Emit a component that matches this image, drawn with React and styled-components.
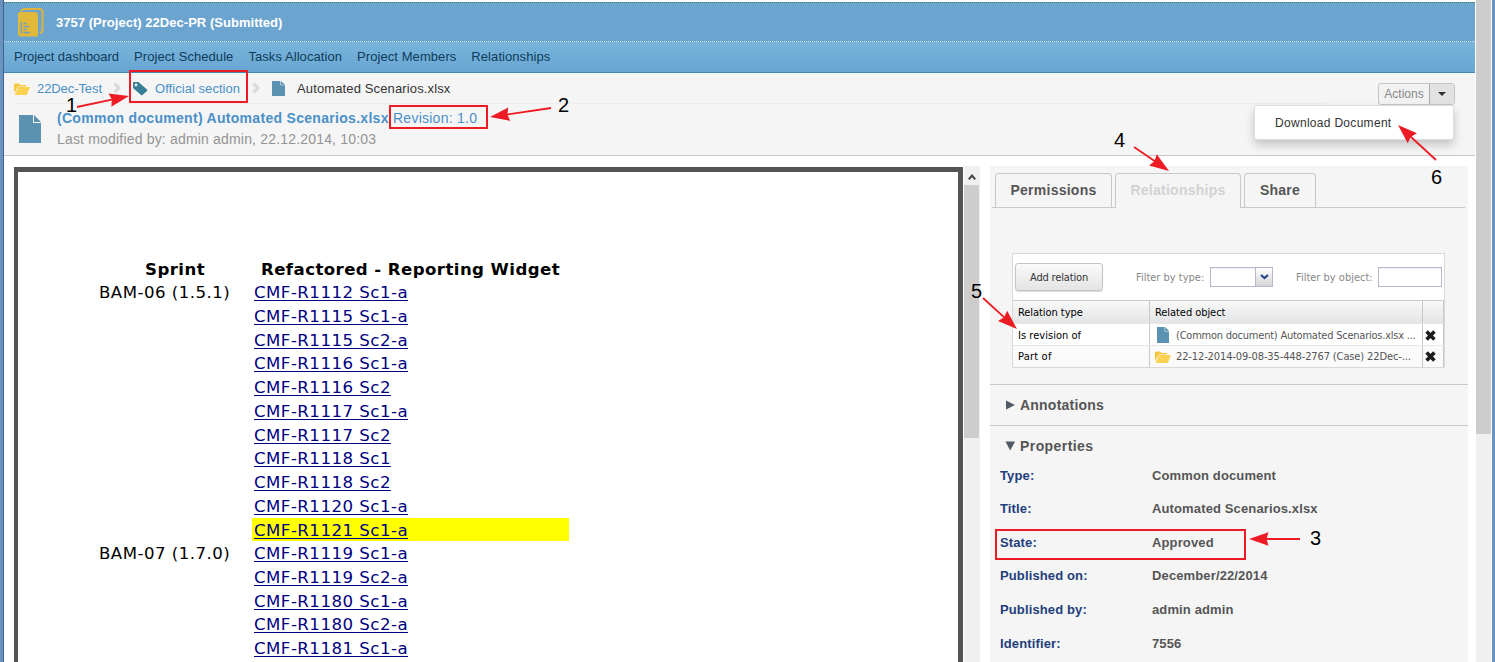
import React from 'react';
import styled, { createGlobalStyle } from 'styled-components';

const Global = createGlobalStyle`
  * { box-sizing: border-box; }
  body { margin: 0; background: #fff; overflow: hidden; font-family: "Liberation Sans", Arial, sans-serif; }
`;
const Window = styled.div`
  position: relative; display: flex; width: 1495px; height: 662px; overflow: hidden;
  background: #fff; border-left: 3px solid #6b93c1; border-right: 3px solid #6b93c1;
`;
const Page = styled.div`
  width: 1472px; height: 662px; flex: none; display: flex; flex-direction: column;
  border-left: 1px solid #41638c; padding-top: 2px;
`;
const Title = styled.header`
  height: 40px; flex: none; display: flex; align-items: center; gap: 12px; padding: 0 0 0 14px;
  background: #6ca4d0; border-top: 1px dotted #3d7d52; border-bottom: 1px dotted #d4e8f5;
  color: #fff; font-size: 13px; font-weight: bold; letter-spacing: 0.03px;
`;
const Nav = styled.nav`
  height: 31px; flex: none; display: flex; align-items: center; gap: 15px; padding: 0 0 1px 10px;
  background: linear-gradient(#77b5dc, #69a5d1); border-bottom: 1px solid #4188b7;
  color: #0e3c5a; font-size: 13px; white-space: nowrap;
`;
const NavItem = styled.span`letter-spacing: 0.07px; &:first-child { letter-spacing: -0.03px; }`;
const Heading = styled.section`
  height: 83px; flex: none; background: #f5f5f5; border-bottom: 1px solid #c8c8c8;
  display: flex; justify-content: space-between; padding-right: 20px;
`;
const HeadMain = styled.div`flex: 1; padding-left: 10px;`;
const Crumbs = styled.div`
  height: 31px; display: flex; align-items: center; border-bottom: 1px solid #ededed; width: 1312px;
  font-size: 13px; color: #4a90c8; white-space: nowrap;
`;
const Crumb = styled.span`
  margin-left: ${p => p.$left}px; width: ${p => p.$w}px; color: ${p => p.$dark ? '#333' : '#4a90c8'};
  letter-spacing: ${p => p.$ls || 0}px;
`;
const IconBox = styled.span`display: flex; flex: none; margin-left: ${p => p.$left || 0}px; padding-top: ${p => p.$top || 0}px;`;
const DocHead = styled.div`display: flex; padding: 4px 0 0 5px; gap: 16px;`;
const DocIcon = styled.div`padding-top: 7px; display: flex;`;
const DocTitle = styled.div`
  display: flex; gap: 4px; height: 20px; align-items: center; color: #4a90c8; font-size: 14px; white-space: nowrap;
`;
const TitleName = styled.b`width: 332px; letter-spacing: 0.3px;`;
const Revision = styled.span`letter-spacing: 0.25px;`;
const Modified = styled.div`height: 22px; line-height: 23px; color: #949494; font-size: 14px; letter-spacing: 0.18px;`;
const Actions = styled.div`
  display: flex; width: 77px; height: 22px; margin-top: 10px; border: 1px solid #c4c4c4; border-radius: 3px;
  background: #f2f2f2; overflow: hidden; color: #888; font-size: 12px;
`;
const ActionLabel = styled.span`width: 50px; line-height: 21px; text-align: center; letter-spacing: 0.05px;`;
const ActionCaret = styled.span`
  flex: 1; display: flex; align-items: center; justify-content: center; background: #e2e2e2; border-left: 1px solid #aaa;
`;
const Menu = styled.div`
  position: absolute; left: 1251px; top: 105px; width: 200px; height: 35px; padding-left: 20px; line-height: 34px;
  background: #fff; border: 1px solid #dedede; border-radius: 3px; box-shadow: 0 5px 10px rgba(0,0,0,.2);
  color: #333; font-size: 12px; letter-spacing: 0.3px;
`;
const Body = styled.main`flex: 1; display: flex; padding: 10px 0 0 10px; min-height: 0;`;
const Viewer = styled.div`
  width: 949px; margin-top: 1px; border: solid #545454; border-width: 5px 5px 0 4px; padding: 84.6px 0 0 77px; overflow: hidden;
  font-family: "DejaVu Sans", Verdana, sans-serif; font-size: 16.6px; color: #000;
`;
const SheetRow = styled.div`
  display: flex; height: 23.73px; line-height: ${p => p.$head ? 25 : 26.6}px; white-space: nowrap; letter-spacing: ${p => p.$head ? 0.42 : 0.48}px;
  font-weight: ${p => p.$head ? 'bold' : 'normal'};
`;
const Sprint = styled.div`
  width: 157px; padding-left: ${p => p.$head ? 3 : 4}px; text-align: ${p => p.$head ? 'center' : 'left'};
`;
const Scenario = styled.div`
  width: 317px; padding-left: ${p => p.$head ? 9 : 2}px; background: ${p => p.$mark ? '#ff0' : 'transparent'};
`;
const Link = styled.a`color: #000080; text-decoration: underline; text-underline-offset: 2px; text-decoration-thickness: 1px;`;
const Track = styled.div`
  width: ${p => p.$w}px; flex: none; background: #f0f0f0; margin-left: 1px; display: flex; flex-direction: column; align-items: flex-start;
`;
const ArrowUp = styled.div`width: 15px; height: 19px; display: flex; align-items: center; justify-content: center; padding-top: 3px;`;
const Thumb = styled.div`width: ${p => p.$w}px; height: ${p => p.$h}px; background: #cdcdcd;`;
const WindowTrack = styled(Track)`width: 16px; border-right: 1px solid #fff;`;
const Side = styled.aside`
  width: 478px; flex: none; margin-left: 10px; background: #f5f5f5; display: flex; flex-direction: column;
`;
const Tabs = styled.div`
  display: flex; flex: none; height: 42px; margin: 0 3px 0 2px; padding: 7px 0 0 3px; gap: 3px; border-bottom: 1px solid #c8c8c8;
`;
const Tab = styled.div`
  width: ${p => p.$w}px; height: ${p => p.$active ? 35 : 34}px; border: 1px solid #c8c8c8; border-bottom: 0;
  border-radius: 4px 4px 0 0; background: #f5f5f5; text-align: center; line-height: 32px;
  font-size: 14px; font-weight: bold; color: ${p => p.$active ? '#d2d2d2' : '#555'}; letter-spacing: 0.25px;
`;
const Grid = styled.div`
  flex: none; width: 433px; height: 115px; margin: 45px 0 0 22px; background: #fff; border: 1px solid #d9d9d9;
  font-family: "DejaVu Sans Condensed", "DejaVu Sans", sans-serif; font-stretch: condensed; font-size: 11px;
  white-space: nowrap;
`;
const Tools = styled.div`height: 46px; display: flex; align-items: center; padding: 0 2px; color: #888;`;
const AddButton = styled.div`
  width: 88px; height: 28px; border: 1px solid #c4c4c4; border-radius: 3px; background: linear-gradient(#fafafa, #e4e4e4);
  box-shadow: 0 1px 1px rgba(0,0,0,.15); color: #333; line-height: 27px; text-align: center; letter-spacing: -0.16px;
`;
const FilterLabel = styled.span`margin-left: ${p => p.$left}px; width: ${p => p.$w}px; letter-spacing: 0;`;
const Field = styled.div`
  width: ${p => p.$w}px; height: 20px; border: 1px solid #b5b8c8; background: linear-gradient(#f3f3f3, #fff 3px);
  display: flex; justify-content: flex-end;
`;
const Trigger = styled.div`
  width: 17px; border-left: 1px solid #b5b8c8; background: linear-gradient(#fff, #d5d5d5); display: flex; align-items: center; justify-content: center;
`;
const GridRow = styled.div`
  display: flex; height: ${p => p.$h}px; align-items: stretch; border-top: 1px solid ${p => p.$head ? '#ccc' : '#e6e6e6'};
  background: ${p => p.$head ? 'linear-gradient(#f9f9f9, #e3e4e6)' : p.$alt ? '#fafafa' : '#fff'};
`;
const Cell = styled.div`
  width: ${p => p.$w}px; display: flex; align-items: center; padding: ${p => p.$top || 0}px 0 0 5px; gap: ${p => p.$gap || 6}px; color: ${p => p.$muted ? '#555' : '#000'};
  border-right: 1px solid #c8c8c8; letter-spacing: ${p => p.$ls ?? -0.06}px;
`;
const Section = styled.div`
  flex: none; height: ${p => p.$h}px; border-top: 1px solid #c8c8c8; display: flex; align-items: center; gap: 5px;
  padding: ${p => p.$pad || 0}px 0 0 15px;
  font-size: 14px; font-weight: bold; color: #555; letter-spacing: ${p => p.$ls}px;
  margin-top: ${p => p.$gap || 0}px;
`;
const Properties = styled.dl`margin: 0; padding: 0 0 0 10px;`;
const Property = styled.div`
  height: 33.55px; display: flex; align-items: center; font-size: 13px; font-weight: bold; letter-spacing: 0.13px;
`;
const Name = styled.dt`width: 152px; color: #233e7c;`;
const Value = styled.dd`margin: 0; color: #555;`;
const Highlight = styled.div`
  position: absolute; border: 2px solid #ed1c24; left: ${p => p.$x - 3}px; top: ${p => p.$y}px; width: ${p => p.$w}px; height: ${p => p.$h}px;
`;
const Callout = styled.span`
  position: absolute; left: ${p => p.$x - 3}px; top: ${p => p.$y}px; font-size: 20px; line-height: 20px; color: #000;
`;
const Arrows = styled.svg`position: absolute; left: -3px; top: 0; pointer-events: none;`;

const FileIcon = ({ w = 13, h = 15 }) => (
  <svg width={w} height={h} viewBox="0 0 22 28" preserveAspectRatio="none"><path d="M0 0H14V8H22V28H0Z" fill="#5b92b1" /><path d="M15 0L22 7H15Z" fill="#5b92b1" /></svg>
);
const FolderIcon = () => (
  <svg width="16" height="12" viewBox="0 0 16 12"><path d="M0 10V1.500Q0 .5 1 .5H5L6.500 2H12V3.500H4L1 8.500Z" fill="#f6c73f" /><path d="M.6 12L4.300 4H16L12.800 12Z" fill="#fbd250" /></svg>
);
const Chevron = () => (
  <svg width="9" height="12" viewBox="0 0 9 12"><path d="M1.500 1.500L6 6L1.500 10.500" fill="none" stroke="#d8d8d8" strokeWidth="3" /></svg>
);
const TagIcon = () => (
  <svg width="15" height="14" viewBox="0 0 15 14"><path d="M0 1Q0 0 1 0H5.500L14 7.500Q14.800 8.300 14 9L9.500 13Q8.800 13.600 8 13L0 6Z" fill="#3a7f98" /><circle cx="3" cy="3" r="1.400" fill="#f5f5f5" /></svg>
);
const ProjectIcon = () => (
  <svg width="26" height="29" viewBox="0 0 26 29">
    <path d="M2.500 3L6 1H21Q24.500 1 24.500 4V23L22 25.500" fill="none" stroke="#dcb43c" strokeWidth="2" />
    <path d="M0 5.500Q0 4 2 4H17Q20 4 20 7V28.500H3Q0 28.500 0 25Z" fill="#e0b93a" />
    <path d="M3.200 14V25.500M5.500 15.500H8.500M5.500 18.500H11M5.500 21.500H8.500M5.500 24.500H12" stroke="#6d9fc0" strokeWidth="1.300" fill="none" />
  </svg>
);
const Cross = () => (
  <svg width="11" height="11" viewBox="0 0 11 11"><path d="M1.600 1.600L9.400 9.400M9.400 1.600L1.600 9.400" stroke="#1c1c1c" strokeWidth="3.600" /></svg>
);
const Triangle = ({ open }) => (
  <svg width="10" height="10" viewBox="0 0 10 10"><path d={open ? 'M.5 .5H10L5.200 9.500Z' : 'M1 .5L10 5L1 9.500Z'} fill="#505a64" /></svg>
);

const rows = [
  ['BAM-06 (1.5.1)', 'CMF-R1112 Sc1-a'], ['', 'CMF-R1115 Sc1-a'], ['', 'CMF-R1115 Sc2-a'], ['', 'CMF-R1116 Sc1-a'],
  ['', 'CMF-R1116 Sc2'], ['', 'CMF-R1117 Sc1-a'], ['', 'CMF-R1117 Sc2'], ['', 'CMF-R1118 Sc1'], ['', 'CMF-R1118 Sc2'],
  ['', 'CMF-R1120 Sc1-a'], ['', 'CMF-R1121 Sc1-a', true], ['BAM-07 (1.7.0)', 'CMF-R1119 Sc1-a'], ['', 'CMF-R1119 Sc2-a'],
  ['', 'CMF-R1180 Sc1-a'], ['', 'CMF-R1180 Sc2-a'], ['', 'CMF-R1181 Sc1-a'],
];
const properties = [
  ['Type:', 'Common document'], ['Title:', 'Automated Scenarios.xlsx'], ['State:', 'Approved'],
  ['Published on:', 'December/22/2014'], ['Published by:', 'admin admin'], ['Identifier:', '7556'],
];
const menu = ['Project dashboard', 'Project Schedule', 'Tasks Allocation', 'Project Members', 'Relationships'];
const highlights = [[129, 70, 119, 33], [389, 105, 99, 24], [995, 529, 251, 31]];
const callouts = [['1', 66, 95], ['2', 558, 95], ['3', 1310, 528], ['4', 1114, 130], ['5', 971, 281], ['6', 1431, 167]];
const arrows = [[77, 107, 129, 96], [551, 108, 490, 117], [1300, 539, 1249, 539], [1134, 147, 1169, 171], [983, 298, 1017, 329], [1436, 160, 1398, 125]];

const Arrow = ({ from: [x1, y1, x2, y2] }) => {
  const len = Math.hypot(x2 - x1, y2 - y1);
  const angle = Math.atan2(y2 - y1, x2 - x1) * 180 / Math.PI;
  return (
    <g transform={`translate(${x2} ${y2}) rotate(${angle})`} fill="#ed1c24">
      <path d={`M${-len} 0H-14`} stroke="#ed1c24" strokeWidth="1.8" />
      <path d="M0 0L-19.500 -6.800L-17.500 0L-19.500 6.800Z" />
    </g>
  );
};

export default function App() {
  return (
    <>
      <Global />
      <Window>
        <Page>
          <Title><ProjectIcon /><span>3757 (Project) 22Dec-PR (Submitted)</span></Title>
          <Nav>{menu.map(m => <NavItem key={m}>{m}</NavItem>)}</Nav>
          <Heading>
            <HeadMain>
              <Crumbs>
                <IconBox $top={1}><FolderIcon /></IconBox><Crumb $left={7} $w={76} $ls={-0.08}>22Dec-Test</Crumb>
                <Chevron /><IconBox $left={11} $top={2}><TagIcon /></IconBox>
                <Crumb $left={7} $w={97} $ls={0.05}>Official section</Crumb>
                <Chevron /><IconBox $left={11} $top={1}><FileIcon /></IconBox>
                <Crumb $left={12} $w={160} $ls={0.13} $dark>Automated Scenarios.xlsx</Crumb>
              </Crumbs>
              <DocHead>
                <DocIcon><FileIcon w={22} h={28} /></DocIcon>
                <div>
                  <DocTitle><TitleName>(Common document) Automated Scenarios.xlsx</TitleName><Revision>Revision: 1.0</Revision></DocTitle>
                  <Modified>Last modified by: admin admin, 22.12.2014, 10:03</Modified>
                </div>
              </DocHead>
            </HeadMain>
            <Actions>
              <ActionLabel>Actions</ActionLabel>
              <ActionCaret><svg width="8" height="4" viewBox="0 0 8 4"><path d="M0 0H8L4 4Z" fill="#333" /></svg></ActionCaret>
            </Actions>
          </Heading>
          <Body>
            <Viewer>
              <SheetRow $head><Sprint $head>Sprint</Sprint><Scenario $head>Refactored - Reporting Widget</Scenario></SheetRow>
              {rows.map(([s, l, mark]) => (
                <SheetRow key={l}><Sprint>{s}</Sprint><Scenario $mark={mark}><Link>{l}</Link></Scenario></SheetRow>
              ))}
            </Viewer>
            <Track $w={16}>
              <ArrowUp><svg width="8" height="6" viewBox="0 0 8 6"><path d="M.8 5.300L4 1.500L7.200 5.300" fill="none" stroke="#444" strokeWidth="2" /></svg></ArrowUp>
              <Thumb $w={15} $h={253} />
            </Track>
            <Side>
              <Tabs>
                <Tab $w={117}>Permissions</Tab><Tab $w={126} $active>Relationships</Tab><Tab $w={72}>Share</Tab>
              </Tabs>
              <Grid>
                <Tools>
                  <AddButton>Add relation</AddButton>
                  <FilterLabel $left={33} $w={74}>Filter by type:</FilterLabel>
                  <Field $w={63}><Trigger><svg width="9" height="6" viewBox="0 0 9 6"><path d="M1 1L4.500 4L8 1" fill="none" stroke="#26478d" strokeWidth="2.200" /></svg></Trigger></Field>
                  <FilterLabel $left={23} $w={82}>Filter by object:</FilterLabel>
                  <Field $w={64} />
                </Tools>
                <GridRow $head $h={23}><Cell $w={137}>Relation type</Cell><Cell $w={273}>Related object</Cell><Cell $w={21} /></GridRow>
                <GridRow $h={22}>
                  <Cell $w={137} $top={1} $ls={0.03}>Is revision of</Cell>
                  <Cell $w={273} $top={1} $gap={7} $muted $ls={-0.23}><IconBox $left={2}><FileIcon w={12} h={16} /></IconBox><span>(Common document) Automated Scenarios.xlsx ...</span></Cell>
                  <Cell $w={21} $top={1}><IconBox $left={-3}><Cross /></IconBox></Cell>
                </GridRow>
                <GridRow $h={22} $alt>
                  <Cell $w={137} $ls={0.2}>Part of</Cell>
                  <Cell $w={273} $gap={5} $muted $ls={-0.12}><FolderIcon /><span>22-12-2014-09-08-35-448-2767 (Case) 22Dec-...</span></Cell>
                  <Cell $w={21}><IconBox $left={-3}><Cross /></IconBox></Cell>
                </GridRow>
              </Grid>
              <Section $gap={16} $h={41} $ls={0.22}><Triangle />Annotations</Section>
              <Section $h={33.5} $pad={7} $ls={0.42}><Triangle open />Properties</Section>
              <Properties>
                {properties.map(([n, v]) => <Property key={n}><Name>{n}</Name><Value>{v}</Value></Property>)}
              </Properties>
            </Side>
          </Body>
        </Page>
        <WindowTrack $w={16}><Thumb $w={15} $h={434} /></WindowTrack>
        <Menu>Download Document</Menu>
        {highlights.map(([x, y, w, h]) => <Highlight key={x} $x={x} $y={y} $w={w} $h={h} />)}
        <Arrows width="1495" height="662">{arrows.map(a => <Arrow key={a[0]} from={a} />)}</Arrows>
        {callouts.map(([t, x, y]) => <Callout key={t} $x={x} $y={y}>{t}</Callout>)}
      </Window>
    </>
  );
}
